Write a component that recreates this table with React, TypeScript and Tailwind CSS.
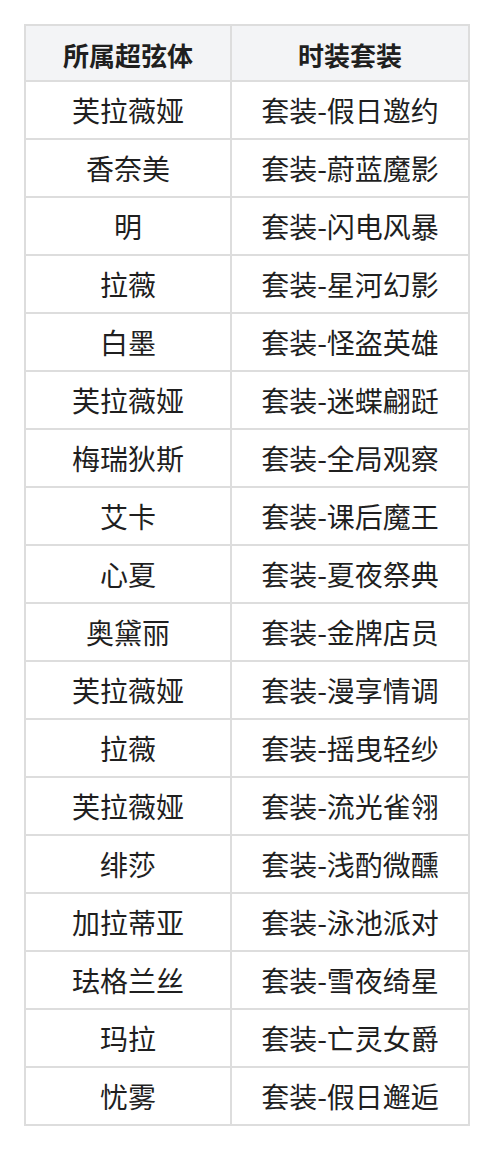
import { Fragment } from 'react';

const rows: [string, string][] = [
  ['芙拉薇娅', '套装-假日邀约'],
  ['香奈美', '套装-蔚蓝魔影'],
  ['明', '套装-闪电风暴'],
  ['拉薇', '套装-星河幻影'],
  ['白墨', '套装-怪盗英雄'],
  ['芙拉薇娅', '套装-迷蝶翩跹'],
  ['梅瑞狄斯', '套装-全局观察'],
  ['艾卡', '套装-课后魔王'],
  ['心夏', '套装-夏夜祭典'],
  ['奥黛丽', '套装-金牌店员'],
  ['芙拉薇娅', '套装-漫享情调'],
  ['拉薇', '套装-摇曳轻纱'],
  ['芙拉薇娅', '套装-流光雀翎'],
  ['绯莎', '套装-浅酌微醺'],
  ['加拉蒂亚', '套装-泳池派对'],
  ['珐格兰丝', '套装-雪夜绮星'],
  ['玛拉', '套装-亡灵女爵'],
  ['忧雾', '套装-假日邂逅'],
];

export default function App() {
  return (
    <div
      className="min-h-[1150px] bg-white p-6 text-[#1f1f1f]"
      style={{ fontFamily: '"Noto Sans CJK SC", "Noto Sans", sans-serif' }}
    >
      <div className="grid w-[446px] grid-cols-[204px_236px] gap-[2px] bg-[#dddddd] p-[2px]">
        <div className="flex h-[54px] items-center justify-center bg-[#f3f4f6] pt-[2px] text-[26px] font-bold">
          所属超弦体
        </div>
        <div className="flex h-[54px] items-center justify-center bg-[#f3f4f6] pt-[2px] text-[26px] font-bold">
          时装套装
        </div>
        {rows.map(([name, outfit], i) => (
          <Fragment key={i}>
            <div className="flex h-[56px] items-center justify-center bg-white text-[28px]">{name}</div>
            <div className="flex h-[56px] items-center justify-center bg-white text-[28px]">{outfit}</div>
          </Fragment>
        ))}
      </div>
    </div>
  );
}
